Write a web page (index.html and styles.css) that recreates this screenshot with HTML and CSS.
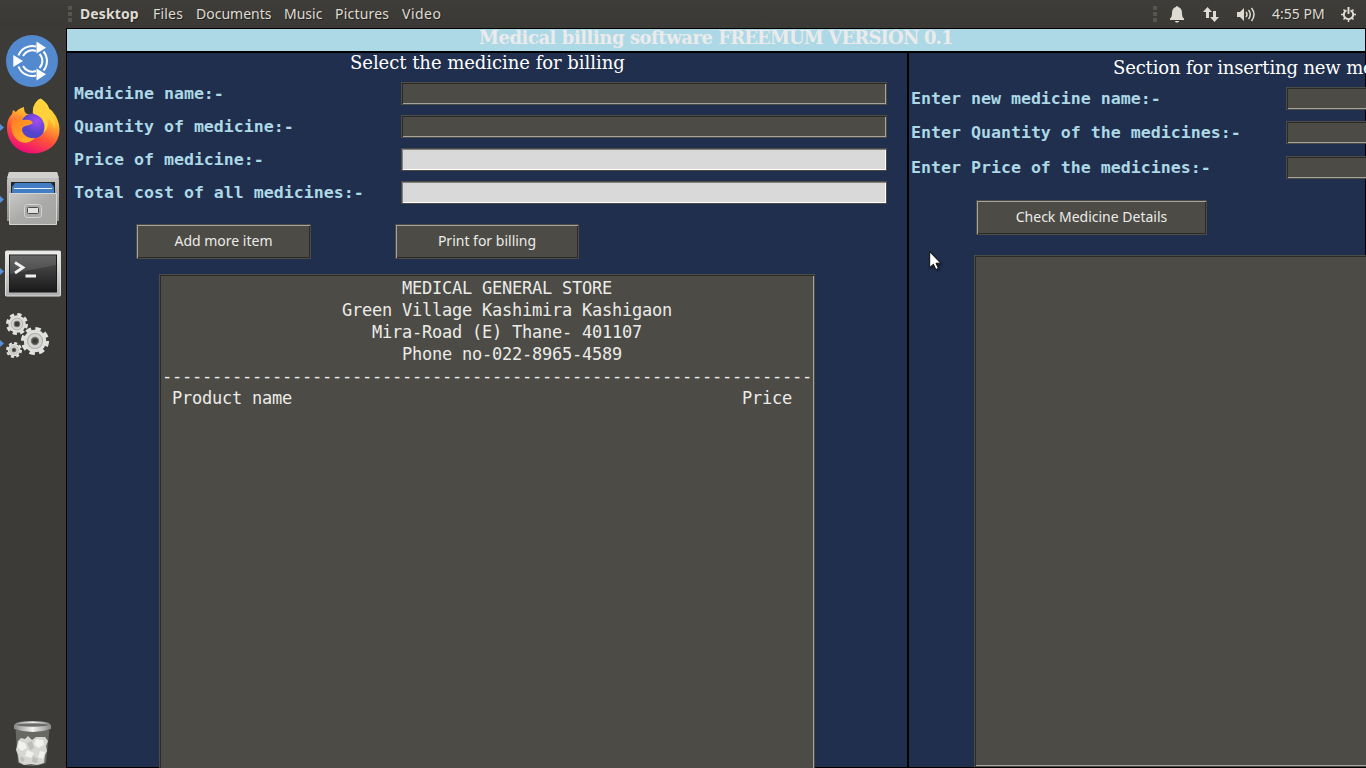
FILE: index.html
```html
<!DOCTYPE html>
<html lang="en">
<head>
<meta charset="utf-8">
<title>Medical billing software</title>
<link rel="stylesheet" href="styles.css">
</head>
<body>
<div class="desktop">
  <header class="panel">
    <div class="grip"><i></i><i></i><i></i></div>
    <nav class="menu">
      <span class="m-desktop">Desktop</span><span class="m-files">Files</span><span class="m-docs">Documents</span><span class="m-music">Music</span><span class="m-pics">Pictures</span><span class="m-video">Video</span>
    </nav>
    <div class="tray">
      <div class="grip"><i></i><i></i><i></i></div>
      <svg class="bell" width="14" height="17" viewBox="0 0 14 17"><path d="M6 1a1 1 0 0 1 2 0c3 .8 4 3 4 6 0 3 .6 4.500 2 5.500V14H0v-1.500C1.400 11.500 2 10 2 7c0-3 1-5.200 4-6zM5 15h4c0 2-4 2-4 0z"/></svg>
      <svg class="net" width="16" height="15" viewBox="0 0 16 15"><path d="M4.500 0L9 5H6v6H3V5H0zM11.500 15L7 10h3V4h3v6h3z"/></svg>
      <svg class="vol" width="19" height="15" viewBox="0 0 19 15"><path d="M0 5h3l4-4v13l-4-4H0z"/><path class="wave" d="M9 5q2 2.500 0 5M11.500 3q3.500 4.500 0 9M14.500 1q5 6.500 0 13"/></svg>
      <span class="clock">4:55 PM</span>
      <svg class="power" width="15" height="15" viewBox="0 0 15 15"><path class="ring" d="M5.500 3.300a4.700 4.700 0 1 0 4 0M7.500 0v7"/><path class="teeth" d="M2.500 2.500l2 2M12.500 2.500l-2 2M0 7.500h3M15 7.500h-3M2.500 12.500l2-2M12.500 12.500l-2-2M7.500 15v-3"/></svg>
    </div>
  </header>
  <div class="work">
    <aside class="dock">
      <svg width="66" height="740" viewBox="0 28 66 740">
        <defs>
          <linearGradient id="silver" x2="0" y2="1"><stop stop-color="#c9c9c7"/><stop offset="1" stop-color="#8e8e8c"/></linearGradient>
          <linearGradient id="front" x2="1" y2="1"><stop stop-color="#c8c8c6"/><stop offset=".5" stop-color="#aaaaa8"/><stop offset="1" stop-color="#a4a4a2"/></linearGradient>
          <linearGradient id="frame" x2="0" y2="1"><stop stop-color="#eeeeec"/><stop offset="1" stop-color="#aeaeb0"/></linearGradient>
          <linearGradient id="screen" x2="0" y2="1"><stop stop-color="#555"/><stop offset="1" stop-color="#191919"/></linearGradient>
          <linearGradient id="fire" x1=".75" y1="0" x2=".35" y2="1"><stop stop-color="#fff044"/><stop offset=".35" stop-color="#ffb82e"/><stop offset=".65" stop-color="#ff5538"/><stop offset="1" stop-color="#ec087b"/></linearGradient>
          <linearGradient id="fox" x2="1" y2="1"><stop stop-color="#ff7c24"/><stop offset="1" stop-color="#ffba25"/></linearGradient>
          <radialGradient id="globe" cx=".65" cy=".3"><stop stop-color="#a44cf5"/><stop offset="1" stop-color="#5544ca"/></radialGradient>
          <linearGradient id="rim"><stop stop-color="#888"/><stop offset=".5" stop-color="#f2f2f0"/><stop offset="1" stop-color="#888"/></linearGradient>
          <g id="gear"><circle r="14" fill="none" stroke="#e2e2e0" stroke-width="4" stroke-dasharray="6.200 4.796"/><circle r="12.700" fill="#dededc"/><circle r="8.500" fill="#d4d4d2" stroke="#aeaeac" stroke-width="1.300"/><circle r="4" fill="#3c3b37" stroke="#70706d" stroke-width="1.500"/></g>
        </defs>
        <g fill="#5690dc"><path d="M0 124l4 3.500-4 3.500zM0 196l4 3.500-4 3.500zM0 268l4 3.500-4 3.500zM0 340l4 3.500-4 3.500z"/></g>
        <circle cx="32" cy="61" r="26" fill="#5389cf"/>
        <g fill="none" stroke="#fff" stroke-width="2">
          <path d="M18.500 55.500A14.500 14.500 0 0 1 36 46.500M23 56A10.500 10.500 0 0 1 36 51M18.500 66.500A14.500 14.500 0 0 0 36 75.500M23 66A10.500 10.500 0 0 0 36 71M43.500 51.500A14.800 14.800 0 0 1 43.500 70.500M39.500 54A10 10 0 0 1 39.500 68"/>
        </g>
        <path fill="#fff" d="M36.500 41.500v12l9.500-5.800zM36.500 80.500v-12l9.500 5.800zM13.300 55v12l9.700-6z"/>
        <path fill="url(#fire)" d="M40.500 98.500c6 3.500 7.500 7 9 10.500 2 1 3 2 4 4 5 6 7 14 5.500 22C56 147 45 153.500 33 153.500 18 153.500 7 142 7 128c0-7 2-11 5-14l1-4 3 2c1-2 4-4 8-5 0 4 1 6 3 7l6 1c-1-7 2-13 7.500-16.500z"/>
        <circle cx="33" cy="126" r="12.500" fill="url(#globe)"/>
        <path fill="url(#fox)" d="M12 121c4-3 9-2 12-1 4-1 8 0 9 3-4 3-10 2-11 6 0 6 6 10 13 9-5 5-11 6-16 3-6-4-9-11-7-20z"/>
        <path fill="#ffd13a" d="M39 99c-6 5-7 11-5 15 4 1 7 3 9 7 2 4 2 8 0 12 5-4 6-10 4-15 4 2 7 7 8 11 1-10-4-12-7-20-1-4-4-8-9-10z"/>
        <path fill="url(#silver)" d="M9 172h48l2 8v41H7v-41z"/>
        <path fill="#d0d0ce" d="M9 172h48l2 6H7z"/>
        <path fill="#252729" d="M11 182h44v12H11z"/>
        <path fill="#427dc6" d="M12 187l3-4h36l3 4v7H12v-6z"/><path stroke="#eef5ff" d="M14 188.500h38"/>
        <path fill="url(#front)" stroke="#d4d4d2" d="M9.500 193.500h47v31h-47z"/>
        <rect x="24.500" y="204.500" width="17" height="13" rx="3" fill="#aaa" stroke="#d5d5d3"/><rect x="27.500" y="207.500" width="11" height="6" rx="1" fill="#e1e1df" stroke="#494b4c"/>
        <rect x="5.500" y="251" width="55" height="45" rx="1" fill="url(#frame)" stroke="#ddd"/><rect x="9.500" y="255" width="47" height="37" fill="url(#screen)" stroke="#1b1b1b"/>
        <path fill="#fff" fill-opacity=".1" d="M10 255h46v10L10 274z"/><path fill="none" stroke="#f0f0ee" stroke-width="2.800" d="M15 262.500l8 5-8 5.500M25.500 276H36"/>
        <use href="#gear" transform="translate(17 324) scale(.69)"/><use href="#gear" transform="translate(35 341) scale(.88)"/><use href="#gear" transform="translate(14 350) scale(.5)"/>
        <path fill="#777976" fill-opacity=".75" d="M15.500 729h34l-3.500 34q-14 6-28 0z"/>
        <path fill="#d6d6d3" d="M18 741l3-3 4 1 3-3 4 4 4-3 4 0 5 0 3 4-2 5 1 5-2 4-1 8-7 2-6-1-7 1-5-3-1-7-2-5z"/>
        <path fill="#f1f1ef" d="M19 741l6 2 2 5-5 3-4-3zM36 739l7 1 1 5-6 3-4-4zM27 750l7 3-3 5-6-2zM40 751l5 1-2 7-5-2z"/>
        <path fill="#bdbdba" d="M27 743l5-2 2 7-4 2zM33 756l5 3-1 4-5-1zM21 756l4 3-2 3-3-2z"/>
        <path fill="#353633" d="M15 726h35v4H15z"/><ellipse cx="32.500" cy="725" rx="17" ry="2.800" fill="#6b6c69" stroke="url(#rim)" stroke-width="2"/><path fill="url(#rim)" d="M14 725q18 6 37 0v4q-18 6-37 0z"/>
      </svg>
    </aside>
    <main class="app">
      <h1 class="banner">Medical billing software <span class="caps">FREEMUM VERSION 0.1</span></h1>
      <div class="columns">
        <section class="billing">
          <h2><span>Select the medicine for billing</span></h2>
          <div class="form">
            <label>Medicine name:-</label><div class="entry"></div>
            <label>Quantity of medicine:-</label><div class="entry"></div>
            <label>Price of medicine:-</label><div class="entry light"></div>
            <label>Total cost of all medicines:-</label><div class="entry light"></div>
          </div>
          <div class="actions"><button class="add"><span>Add more item</span></button><button class="print"><span>Print for billing</span></button></div>
          <pre class="receipt">                        MEDICAL GENERAL STORE
                  Green Village Kashimira Kashigaon
                     Mira-Road (E) Thane- 401107
                        Phone no-022-8965-4589
<span class="rule">-----------------------------------------------------------------</span>
 Product name                                             Price</pre>
        </section>
        <section class="insert">
          <h2><span>Section for inserting new me</span></h2>
          <div class="form">
            <label>Enter new medicine name:-</label><div class="entry"></div>
            <label>Enter Quantity of the medicines:-</label><div class="entry"></div>
            <label>Enter Price of the medicines:-</label><div class="entry"></div>
          </div>
          <button class="check"><span>Check Medicine Details</span></button>
          <div class="details"></div>
        </section>
      </div>
    </main>
  </div>
  <svg class="cursor" width="14" height="21" viewBox="0 0 14 21"><path d="M.7.800v15.700l3.700-3.300 2.500 5.300 2.500-1.200-2.400-5.100h4.700z"/></svg>
</div>
</body>
</html>
```
FILE: styles.css
```css
* { box-sizing: border-box; }
body { margin: 0; overflow: hidden; background: #3c3b37; }
.desktop { position: relative; width: 1366px; height: 768px; overflow: hidden; display: flex; flex-direction: column; }
.panel { height: 28px; flex: none; display: flex; align-items: center; padding-left: 68px; background: linear-gradient(#3e3d39, #3a3935); color: #dfdbd2; font: 14px/28px "Noto Sans", sans-serif; text-shadow: 1px 1px 0 #242320; }
.grip { display: grid; gap: 2px; width: 4px; flex: none; }
.grip i { width: 4px; height: 4px; background: #565550; }
.menu { display: flex; margin-left: 8px; white-space: nowrap; }
.menu span { flex: none; }
.m-desktop { width: 73px; font-weight: bold; letter-spacing: .1px; }
.m-files { width: 43px; letter-spacing: .2px; }
.m-docs { width: 88px; }
.m-music { width: 51px; }
.m-pics { width: 67px; letter-spacing: .2px; }
.m-video { letter-spacing: .5px; }
.tray { display: flex; align-items: center; margin-left: auto; width: 213px; }
.tray svg { fill: #dfdbd2; flex: none; }
.bell { margin-left: 13px; }
.net { margin-left: 19px; }
.vol { margin-left: 18px; }
.wave, .ring, .teeth { fill: none; stroke: #dfdbd2; stroke-width: 1.5; }
.ring { stroke-width: 2; }
.clock { width: 53px; margin-left: 16px; white-space: nowrap; }
.power { margin-left: 16px; }
.work { display: flex; height: 740px; }
.dock { width: 66px; flex: none; background: #3c3b37; }
.dock svg { display: block; }
.app { width: 1300px; border: 1px solid #000; background: #1f2f4d; display: flex; flex-direction: column; }
h1, h2 { margin: 0; white-space: nowrap; }
h2 span { display: inline-block; }
.banner { height: 22px; padding-left: 412px; background: #add8e6; color: #ebebeb; font: bold 18px/17px "DejaVu Serif", serif; letter-spacing: -.47px; }
.caps { letter-spacing: -.86px; }
.columns { display: flex; flex: 1; border-top: 2px solid #000; min-height: 0; }
.billing { width: 842px; flex: none; border-right: 2px solid #000; }
h2 { height: 30px; padding-left: 283px; color: #fff; font: 18px/20px "DejaVu Serif", serif; letter-spacing: -.04px; }
.form { display: grid; grid-template-columns: 327px 486px; grid-auto-rows: 23px; row-gap: 10px; padding-left: 7px; }
label { color: #add8e6; font: bold 16.6px/22px "DejaVu Sans Mono", monospace; white-space: pre; }
.entry { height: 23px; margin-top: -1px; border: 1px solid #4c4b45; background: #4c4b45; box-shadow: inset 1px 1px #2b2a26, inset -1px -1px #a6a49c; }
.entry.light { background: #d9d9d9; border-color: #4c4b45; box-shadow: inset 1px 1px #82827e, inset -1px -1px #fff; }
.actions { display: flex; padding: 19px 0 0 69px; gap: 84px; }
button { padding: 0 0 2px; height: 35px; border: 1px solid #4c4b45; border-radius: 0; color: #ebebe9; background: #4c4b45; font: 14px/30px "Noto Sans", sans-serif; box-shadow: inset 1px 1px #a6a49c, inset -1px -1px #2b2a26; }
.add { width: 175px; }
.print { width: 184px; }
.receipt { width: 656px; height: 510px; margin: 15px 0 0 92px; padding: 2px 0 0 2px; border: 1px solid #4c4b45; background: #4c4b45; color: #ebebe9; font: 17px/22px "DejaVu Sans Mono", monospace; letter-spacing: -.235px; box-shadow: inset 1px 1px #2b2a26, inset -1px 0 #a6a49c; overflow: hidden; }
.rule { display: inline-block; }
.insert { width: 457px; flex: none; }
.insert h2 { height: 35px; padding: 5px 0 0 204px; letter-spacing: -.15px; }
.insert .form { grid-template-columns: 375px 486px; grid-template-rows: 34px 35px 23px; grid-auto-rows: auto; row-gap: 0; padding-left: 2px; }
.check { display: block; width: 231px; margin: 20px 0 0 67px; }
.details { width: 700px; height: 512px; margin: 20px 0 0 65px; border: 1px solid #4c4b45; background: #4c4b45; box-shadow: inset 1px 1px #2b2a26, inset -1px -1px #a6a49c; }
.cursor { position: absolute; left: 929px; top: 251px; fill: #fff; stroke: #111; stroke-width: 1; filter: drop-shadow(1px 1px 1px #0008); }
```
